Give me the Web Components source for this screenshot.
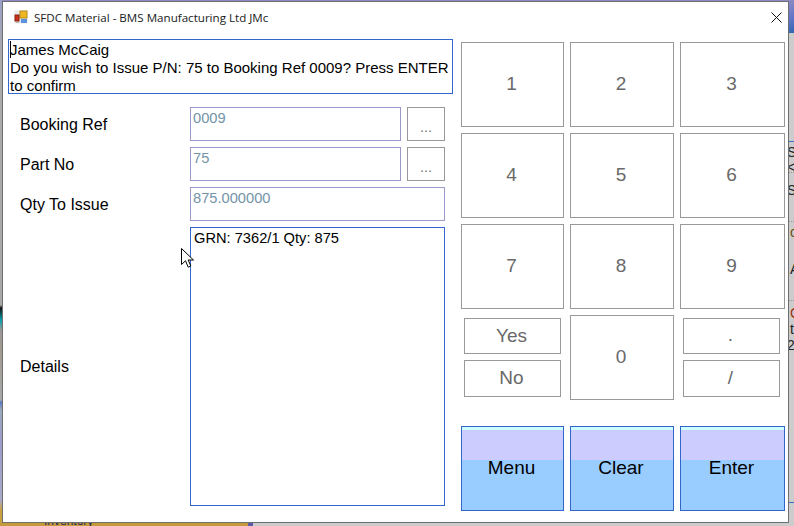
<!DOCTYPE html>
<html>
<head>
<meta charset="utf-8">
<title>SFDC Material</title>
<style>
html, body { margin: 0; padding: 0; width: 794px; height: 526px; overflow: hidden; }
</style>
</head>
<body>
<sfdc-desktop>
  <sfdc-window heading="SFDC Material - BMS Manufacturing Ltd JMc">
    <sfdc-form slot="left"></sfdc-form>
    <sfdc-keypad slot="right"></sfdc-keypad>
  </sfdc-window>
</sfdc-desktop>
<script>
class SfdcDesktop extends HTMLElement {
  constructor() {
    super()
    this.attachShadow({ mode: 'open' })
    this.shadowRoot.innerHTML = `
<style>
:host { display: block; position: relative; width: 794px; height: 526px; overflow: hidden; background: #cccccc; font-family: "Liberation Sans", Arial, sans-serif; }
.top { position: absolute; left: 0; top: 0; right: 0; height: 2px; background: #8e8ac4; }
.topright { position: absolute; right: 0; top: 0; width: 6px; height: 33px; background: linear-gradient(160deg, #8e8ac4, #5d74c8 60%, #2f66b0); }
.left { position: absolute; left: 0; top: 0; width: 2px; height: 526px;
  background: linear-gradient(#9aa0c8 0, #aaa 60px, #a8a8a8 305px, #111 308px, #08a0b0 320px, #999 330px, #a09a90 350px, #a8a8a8 400px, #5b78c4 402px, #9ab 410px, #9c9ccc 440px, #a9a9c9 500px, #c9a040 510px); }
.bottom { position: absolute; left: 0; bottom: 0; width: 248px; height: 4px; background: #c49a3a; color: #1c2a60; font-size: 12px; line-height: 12px; overflow: hidden; }
.bottom span { position: absolute; left: 44px; top: -7px; }
.bar { position: absolute; left: 248px; bottom: 0; width: 5px; height: 4px; background: #5a5aa8; }
.frag { position: absolute; left: 789px; font-size: 14px; line-height: 14px; color: #222; white-space: nowrap; }
.rule { position: absolute; left: 789px; width: 5px; height: 0; border-top: 1px dotted #999; }
.blue { position: absolute; left: 789px; width: 5px; top: 141px; height: 1px; background: #3b6cc6; }
.blue2 { position: absolute; left: 789px; width: 5px; top: 502px; height: 1px; background: #3b6cc6; }
</style>
<div class="top"></div>
<div class="topright"></div>
<div class="left"></div>
<div class="bottom"><span>Inventory</span></div>
<div class="bar"></div>
<div class="blue"></div>
<div class="blue2"></div>
<div class="rule" style="top:172px"></div>
<div class="rule" style="top:221px"></div>
<div class="rule" style="top:300px"></div>
<div class="frag" style="top:145px;left:787px">S</div>
<div class="frag" style="top:160px;left:787px">&lt;</div>
<div class="frag" style="top:183px;left:787px">S</div>
<div class="frag" style="top:225px;left:790px;color:#6a4a10">c</div>
<div class="frag" style="top:262px;left:790px">A</div>
<div class="frag" style="top:306px;left:790px;color:#a03010">C</div>
<div class="frag" style="top:322px;left:790px">t</div>
<div class="frag" style="top:338px;left:787px">2</div>
<slot></slot>`
  }
}

class SfdcWindow extends HTMLElement {
  constructor() {
    super()
    this.attachShadow({ mode: 'open' })
    this.shadowRoot.innerHTML = `
<style>
:host { display: flex; flex-direction: column; position: absolute; left: 2px; top: 1px; width: 787px; height: 522px; box-sizing: border-box; background: #fff; border: 1px solid #6f6f6f; color: #000; }
.title { height: 37px; flex: none; display: flex; align-items: flex-start; padding: 8px 0 0 11px; box-sizing: border-box; font: 11.6px "Open Sans", "Noto Sans", sans-serif; color: #1a1a1a; }
.title svg { flex: none; margin-right: 6px; }
.title span { flex: 1; line-height: 16px; white-space: nowrap; }
.close { flex: none; margin: 2px 13px 0 0; }
.body { flex: 1; display: flex; padding-left: 5px; }
.l { width: 453px; flex: none; }
.r { flex: 1; padding-top: 3px; }
</style>
<div class="title">
  <svg width="14" height="14" viewBox="0 0 14 14">
    <rect x="0.5" y="0.5" width="13" height="13" fill="#e9e9e9"/>
    <rect x="6" y="1" width="7" height="7" fill="#f0b820" stroke="#b88a18" stroke-width="1"/>
    <rect x="1" y="5" width="4" height="6" fill="#c8321e" stroke="#8a2014" stroke-width="1"/>
    <rect x="7" y="9" width="6" height="4" fill="#5c92dc"/>
    <rect x="2" y="12" width="3" height="1" fill="#bbb"/>
  </svg>
  <span id="h"></span>
  <svg class="close" width="11" height="11" viewBox="0 0 11 11"><path d="M0.5 0.5L10.5 10.5M10.5 0.5L0.5 10.5" stroke="#111" stroke-width="1" fill="none"/></svg>
</div>
<div class="body">
  <div class="l"><slot name="left"></slot></div>
  <div class="r"><slot name="right"></slot></div>
</div>`
    this.shadowRoot.getElementById('h').textContent = this.getAttribute('heading')
  }
}

class SfdcField extends HTMLElement {
  constructor() {
    super()
    this.attachShadow({ mode: 'open' })
    this.shadowRoot.innerHTML = `
<style>
:host { display: block; box-sizing: border-box; height: 34px; border: 1px solid #9999cc; padding: 1px 0 0 2px; font: 14.67px/19px "Liberation Sans", Arial, sans-serif; color: #7393a7; background: #fff; overflow: hidden; }
</style><slot></slot>`
  }
}

class SfdcKey extends HTMLElement {
  constructor() {
    super()
    this.attachShadow({ mode: 'open' })
    this.shadowRoot.innerHTML = `
<style>
:host { display: flex; align-items: center; justify-content: center; box-sizing: border-box; border: 1px solid #999; background: #fff; color: #696969; font: 19px "Liberation Sans", Arial, sans-serif; min-height: 0; padding: 0 2px 2px 0; }
:host([kind=action]) { border: 1px solid #3366cc; color: #000; padding: 0 2px 1px 0; background: linear-gradient(#ccffff 0, #ccffff 3px, #ccccff 3px, #ccccff 33px, #99ccff 33px); }
:host([kind=small]) { padding: 0 2px 0 0; }
</style><slot></slot>`
  }
}

class SfdcForm extends HTMLElement {
  constructor() {
    super()
    this.attachShadow({ mode: 'open' })
    this.shadowRoot.innerHTML = `
<style>
:host { display: block; position: relative; font: 16px "Liberation Sans", Arial, sans-serif; color: #000; }
.msg { box-sizing: border-box; width: 445px; height: 55px; border: 1px solid #3366cc; padding: 1px 1px 0 1px; font-size: 15px; line-height: 18px; overflow: hidden; position: relative; }
.caret { position: absolute; left: 1px; top: 1px; width: 1px; height: 17px; background: #000; }
.grid { display: grid; grid-template-columns: 182px 211px 38px; column-gap: 0; row-gap: 6px; margin-top: 13px; grid-auto-rows: 34px; }
.lab { padding: 2px 0 0 12px; display: flex; align-items: center; }
.grid sfdc-field.w { grid-column: 2 / 4; margin-right: -6px; width: 255px; }
.more { margin-left: 6px; width: 38px; height: 34px; box-sizing: border-box; border: 1px solid #999; color: #7a7a7a; text-align: center; font-size: 14.67px; line-height: 38px; }
.details { grid-column: 1 / -1; display: grid; grid-template-columns: 182px 255px; height: 279px; }
.details .lab { align-self: center; padding: 0 0 0 12px; }
.box { box-sizing: border-box; border: 1px solid #3366cc; padding: 1px 2px 1px 3px; font-size: 14.67px; line-height: 19px; }
.mouse { position: absolute; left: 173px; top: 209px; }
</style>
<div class="msg"><div class="caret"></div>James McCaig<br>Do you wish to Issue P/N: 75 to Booking Ref 0009? Press ENTER to confirm</div>
<div class="grid">
  <div class="lab">Booking Ref</div><sfdc-field>0009</sfdc-field><div class="more">...</div>
  <div class="lab">Part No</div><sfdc-field>75</sfdc-field><div class="more">...</div>
  <div class="lab">Qty To Issue</div><sfdc-field class="w">875.000000</sfdc-field>
  <div class="details">
    <div class="lab">Details</div>
    <div class="box">GRN: 7362/1 Qty: 875</div>
  </div>
</div>
<svg class="mouse" width="13" height="20" viewBox="0 0 13 20"><path d="M0.5 0.5V16.5L4.5 12.8L7.2 19.2L9.8 18L7.2 12H12.5Z" fill="#fff" stroke="#000" stroke-width="1"/></svg>`
  }
}

class SfdcKeypad extends HTMLElement {
  constructor() {
    super()
    this.attachShadow({ mode: 'open' })
    this.shadowRoot.innerHTML = `
<style>
:host { display: grid; grid-template-columns: 103px 104px 105px; grid-template-rows: repeat(4, 85px); grid-auto-rows: 85px; column-gap: 6px; row-gap: 6px; }
.pair { display: flex; flex-direction: column; gap: 6px; padding: 3px 3px 3px 3px; box-sizing: border-box; }
.pair.end { padding-right: 5px; }
.pair sfdc-key:first-child { height: 36px; flex: none; }
.pair sfdc-key:last-child { height: 37px; flex: none; }
.actions { grid-column: 1 / -1; display: grid; grid-template-columns: 103px 104px 105px; column-gap: 6px; height: 85px; margin-top: 20px; }
</style>
<sfdc-key>1</sfdc-key><sfdc-key>2</sfdc-key><sfdc-key>3</sfdc-key>
<sfdc-key>4</sfdc-key><sfdc-key>5</sfdc-key><sfdc-key>6</sfdc-key>
<sfdc-key>7</sfdc-key><sfdc-key>8</sfdc-key><sfdc-key>9</sfdc-key>
<div class="pair"><sfdc-key kind="small">Yes</sfdc-key><sfdc-key>No</sfdc-key></div>
<sfdc-key>0</sfdc-key>
<div class="pair end"><sfdc-key>.</sfdc-key><sfdc-key>/</sfdc-key></div>
<div class="actions">
  <sfdc-key kind="action">Menu</sfdc-key><sfdc-key kind="action">Clear</sfdc-key><sfdc-key kind="action">Enter</sfdc-key>
</div>`
  }
}

customElements.define('sfdc-desktop', SfdcDesktop)
customElements.define('sfdc-window', SfdcWindow)
customElements.define('sfdc-field', SfdcField)
customElements.define('sfdc-key', SfdcKey)
customElements.define('sfdc-form', SfdcForm)
customElements.define('sfdc-keypad', SfdcKeypad)
</script>
</body>
</html>
